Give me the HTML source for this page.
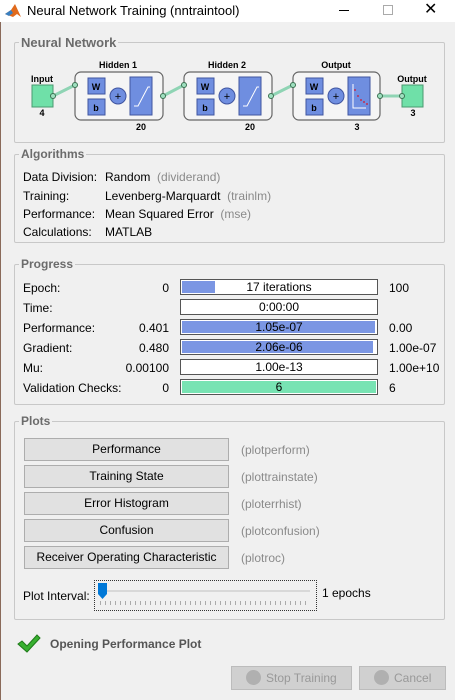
<!DOCTYPE html>
<html><head><meta charset="utf-8"><style>
*{margin:0;padding:0;box-sizing:border-box}
body{width:455px;height:700px;background:#f0f0f0;font-family:"Liberation Sans",sans-serif;font-size:12px;color:#000;position:relative;overflow:hidden}
.a{position:absolute;white-space:nowrap;line-height:14px}
.tb{position:absolute;left:0;top:0;width:455px;height:22px;background:#fff}
.pan{position:absolute;border:1px solid #c8c8c8;border-radius:2px}
.pt{position:absolute;background:#f0f0f0;font-weight:bold;color:#6b6b6b;font-size:12px;padding:0 2px;left:4px;top:-8px}
.g{color:#8a8a8a}
.bar{position:absolute;left:180px;width:198px;height:16px;border:1px solid #555;background:#fff;text-align:center;line-height:14px}
.fill{position:absolute;left:1px;top:1px;bottom:1px;background:#7b96e3}
.bar span{position:relative}
.lv{position:absolute;width:80px;left:89px;text-align:right;line-height:14px}
.btn{position:absolute;left:24px;width:205px;height:23px;background:#e1e1e1;border:1px solid #adadad;text-align:center;line-height:21px}
</style></head><body>
<div class="tb"></div>
<div style="position:absolute;left:0;top:22px;width:1px;height:678px;background:#8a6a5a"></div>
<svg class="a" style="left:4px;top:3px" width="18" height="16" viewBox="0 0 18 16"><path d="M1 11 L7 7 L11 1 L17 14 L13 11 L9 14 Z" fill="#e06a1c"/><path d="M1 11 L7 7 L9 10 L5 13Z" fill="#3a7fc0"/></svg>
<div class="a" style="left:27px;top:4px;font-size:13px">Neural Network Training (nntraintool)</div>
<div class="a" style="left:339px;top:10px;width:10px;height:1px;background:#000"></div>
<div class="a" style="left:383px;top:5px;width:10px;height:10px;border:1px solid #aaa"></div>
<div class="a" style="left:424px;top:3px;font-size:16px">✕</div>

<div class="pan" style="left:14px;top:42px;width:431px;height:101px"><div class="pt" style="font-size:13px">Neural Network</div></div>
<svg class="a" style="left:0;top:55px" width="455" height="85" viewBox="0 55 455 85" font-family="Liberation Sans" font-size="9" font-weight="bold" text-anchor="middle">
<g stroke="#8fd4b4" stroke-width="3" fill="none">
<path d="M53 96 L75 85 M163 96 L184 85 M271 96 L293 85 M380 96 L402 96"/>
<path d="M78 85 L88 85 M187 85 L197 85 M296 85 L306 85"/>
<path d="M105 85 Q112 85 114 90 M105 107 Q112 107 114 102 M214 85 Q221 85 223 90 M214 107 Q221 107 223 102 M323 85 Q330 85 332 90 M323 107 Q330 107 332 102"/>
<path d="M152 96 L160 96 M261 96 L268 96 M370 96 L377 96"/>
</g>
<g fill="#f5f5f5" stroke="#666" stroke-width="1.2"><rect x="75" y="72" width="88" height="48" rx="6"/><rect x="184" y="72" width="88" height="48" rx="6"/><rect x="293" y="72" width="87" height="48" rx="6"/></g>
<g fill="#6fe0a8" stroke="#4a9a70"><rect x="32" y="85" width="21" height="22"/><rect x="402" y="85" width="21" height="22"/></g>
<g fill="#6f8ee0" stroke="#4055a0">
<rect x="88" y="78" width="17" height="16"/><rect x="88" y="99" width="17" height="16"/><rect x="130" y="77" width="22" height="38"/>
<rect x="197" y="78" width="17" height="16"/><rect x="197" y="99" width="17" height="16"/><rect x="239" y="77" width="22" height="38"/>
<rect x="306" y="78" width="17" height="16"/><rect x="306" y="99" width="17" height="16"/><rect x="348" y="77" width="22" height="38"/>
<circle cx="118" cy="96" r="8"/><circle cx="227" cy="96" r="8"/><circle cx="336" cy="96" r="8"/></g>
<g fill="#9fe0c0" stroke="#3a7050"><circle cx="53" cy="96" r="2.5"/><circle cx="75" cy="85" r="2.5"/><circle cx="163" cy="96" r="2.5"/><circle cx="184" cy="85" r="2.5"/><circle cx="271" cy="96" r="2.5"/><circle cx="293" cy="85" r="2.5"/><circle cx="380" cy="96" r="2.5"/><circle cx="402" cy="96" r="2.5"/></g>
<g stroke="#fff" stroke-width="1" fill="none"><path d="M134 106 L138 106 L148 87 L150 87 M243 106 L247 106 L257 87 L259 87"/><path d="M353 84 L353 108 L366 108"/></g>
<g fill="#c03050"><circle cx="355" cy="90" r="1"/><circle cx="358" cy="96" r="1"/><circle cx="361" cy="100" r="1"/><circle cx="364" cy="102" r="1"/><circle cx="367" cy="104" r="1"/></g>
<g font-size="11" font-weight="normal"><text x="118" y="100">+</text><text x="227" y="100">+</text><text x="336" y="100">+</text></g>
<text x="96" y="90">W</text><text x="96" y="111">b</text><text x="205" y="90">W</text><text x="205" y="111">b</text><text x="314" y="90">W</text><text x="314" y="111">b</text>
<text x="118" y="68">Hidden 1</text><text x="227" y="68">Hidden 2</text><text x="336" y="68">Output</text>
<text x="42" y="82">Input</text><text x="412" y="82">Output</text>
<text x="42" y="116">4</text><text x="413" y="116">3</text>
<text x="141" y="130">20</text><text x="250" y="130">20</text><text x="357" y="130">3</text>
</svg>

<div class="pan" style="left:14px;top:154px;width:431px;height:89px"><div class="pt">Algorithms</div></div>
<div class="a" style="left:23px;top:170px">Data Division:</div><div class="a" style="left:105px;top:170px">Random &nbsp;<span class="g">(dividerand)</span></div>
<div class="a" style="left:23px;top:189px">Training:</div><div class="a" style="left:105px;top:189px">Levenberg-Marquardt &nbsp;<span class="g">(trainlm)</span></div>
<div class="a" style="left:23px;top:207px">Performance:</div><div class="a" style="left:105px;top:207px">Mean Squared Error &nbsp;<span class="g">(mse)</span></div>
<div class="a" style="left:23px;top:225px">Calculations:</div><div class="a" style="left:105px;top:225px">MATLAB</div>

<div class="pan" style="left:14px;top:264px;width:431px;height:141px"><div class="pt">Progress</div></div>
<div class="a" style="left:23px;top:281px">Epoch:</div>
<div class="a" style="left:23px;top:301px">Time:</div>
<div class="a" style="left:23px;top:321px">Performance:</div>
<div class="a" style="left:23px;top:341px">Gradient:</div>
<div class="a" style="left:23px;top:361px">Mu:</div>
<div class="a" style="left:23px;top:381px">Validation Checks:</div>
<div class="lv" style="top:281px">0</div><div class="lv" style="top:321px">0.401</div><div class="lv" style="top:341px">0.480</div><div class="lv" style="top:361px">0.00100</div><div class="lv" style="top:381px">0</div>
<div class="bar" style="top:279px"><div class="fill" style="width:33px"></div><span>17 iterations</span></div>
<div class="bar" style="top:299px"><span>0:00:00</span></div>
<div class="bar" style="top:319px"><div class="fill" style="width:193px"></div><span>1.05e-07</span></div>
<div class="bar" style="top:339px"><div class="fill" style="width:191px"></div><span>2.06e-06</span></div>
<div class="bar" style="top:359px"><span>1.00e-13</span></div>
<div class="bar" style="top:379px"><div class="fill" style="width:194px;background:#78e3b3"></div><span>6</span></div>
<div class="a" style="left:389px;top:281px">100</div>
<div class="a" style="left:389px;top:321px">0.00</div>
<div class="a" style="left:389px;top:341px">1.00e-07</div>
<div class="a" style="left:389px;top:361px">1.00e+10</div>
<div class="a" style="left:389px;top:381px">6</div>

<div class="pan" style="left:14px;top:421px;width:431px;height:199px"><div class="pt">Plots</div></div>
<div class="btn" style="top:438px">Performance</div>
<div class="btn" style="top:465px">Training State</div>
<div class="btn" style="top:492px">Error Histogram</div>
<div class="btn" style="top:519px">Confusion</div>
<div class="btn" style="top:546px">Receiver Operating Characteristic</div>
<div class="a g" style="left:241px;top:443px">(plotperform)</div>
<div class="a g" style="left:241px;top:470px">(plottrainstate)</div>
<div class="a g" style="left:241px;top:497px">(ploterrhist)</div>
<div class="a g" style="left:241px;top:524px">(plotconfusion)</div>
<div class="a g" style="left:241px;top:551px">(plotroc)</div>
<div class="a" style="left:23px;top:589px">Plot Interval:</div>
<div class="a" style="left:94px;top:580px;width:223px;height:31px;border:1px dotted #333"></div>
<div class="a" style="left:102px;top:590px;width:208px;height:2px;background:#d8d8d8"></div>
<div class="a" style="left:100px;top:601px;width:210px;height:4px;background:repeating-linear-gradient(90deg,#aaa 0 1px,transparent 1px 5px)"></div>
<svg class="a" style="left:97px;top:582px" width="12" height="18"><path d="M1 1 H10 V12 L5.5 17 L1 12Z" fill="#0078d7"/></svg>
<div class="a" style="left:322px;top:586px">1 epochs</div>

<svg class="a" style="left:17px;top:634px" width="24" height="20"><path d="M1 10 L5 7 L10 12 L20 1 L23 4 L10 18Z" fill="#38b030" stroke="#1f7a1a"/></svg>
<div class="a" style="left:50px;top:637px;font-weight:bold;color:#555;font-size:12px">Opening Performance Plot</div>

<div class="a" style="left:231px;top:666px;width:121px;height:24px;background:#d0d0d0;border:1px solid #bcbcbc;color:#999;line-height:22px;padding-left:34px;font-size:12px">Stop Training</div>
<div class="a" style="left:246px;top:670px;width:15px;height:15px;border-radius:50%;background:#b0b0b0"></div>
<div class="a" style="left:359px;top:666px;width:87px;height:24px;background:#d0d0d0;border:1px solid #bcbcbc;color:#999;line-height:22px;padding-left:34px;font-size:12px">Cancel</div>
<div class="a" style="left:374px;top:670px;width:15px;height:15px;border-radius:50%;background:#b0b0b0"></div>
</body></html>
